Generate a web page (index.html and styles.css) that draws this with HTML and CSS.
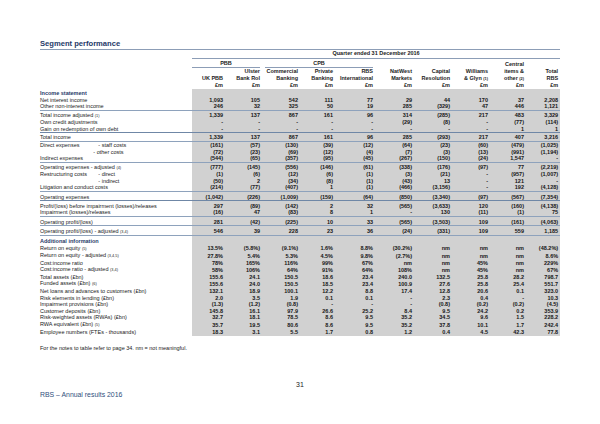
FILE: index.html
```html
<!DOCTYPE html>
<html lang="en">
<head>
<meta charset="utf-8">
<title>Segment performance</title>
<link rel="stylesheet" href="styles.css">
</head>
<body>
<div class="page">
  <h2 class="title">Segment performance</h2>
  <table class="seg">
    <colgroup>
      <col class="c-lbl"><col class="c1"><col class="c2"><col class="c3"><col class="c4"><col class="c5"><col class="c6"><col class="c7"><col class="c8"><col class="c9"><col class="c10">
    </colgroup>
    <thead>
      <tr class="h-period"><th></th><th colspan="10" class="period">Quarter ended 31 December 2016</th></tr>
      <tr class="h-group"><th></th><th colspan="2"><div class="grp">PBB</div></th><th colspan="3"><div class="grp grp-c">CPB</div></th><th></th><th></th><th></th><th class="n">Central</th><th></th></tr>
      <tr><th></th><th></th><th class="n">Ulster</th><th class="n">Commercial</th><th class="n">Private</th><th class="n">RBS</th><th class="n">NatWest</th><th class="n">Capital</th><th class="n">Williams</th><th class="n">items &amp;</th><th class="n">Total</th></tr>
      <tr><th></th><th class="n">UK PBB</th><th class="n">Bank RoI</th><th class="n">Banking</th><th class="n">Banking</th><th class="n">International</th><th class="n">Markets</th><th class="n">Resolution</th><th class="n">&amp; Glyn <small>(1)</small></th><th class="n">other <small>(2)</small></th><th class="n">RBS</th></tr>
      <tr class="h-unit"><th></th><th class="n">£m</th><th class="n">£m</th><th class="n">£m</th><th class="n">£m</th><th class="n">£m</th><th class="n">£m</th><th class="n">£m</th><th class="n">£m</th><th class="n">£m</th><th class="n">£m</th></tr>
    </thead>
    <tbody>
      <tr class="sec first"><td class="lbl">Income statement</td><td></td><td></td><td></td><td></td><td></td><td></td><td></td><td></td><td></td><td></td></tr>
      <tr><td class="lbl">Net interest income</td><td>1,093</td><td>105</td><td>542</td><td>111</td><td>77</td><td>29</td><td>44</td><td>170</td><td>37</td><td>2,208</td></tr>
      <tr><td class="lbl">Other non-interest income</td><td>246</td><td>32</td><td>325</td><td>50</td><td>19</td><td>285</td><td>(329)</td><td>47</td><td>446</td><td>1,121</td></tr>
      <tr class="ruled"><td class="lbl">Total income adjusted <small>(1)</small></td><td>1,339</td><td>137</td><td>867</td><td>161</td><td>96</td><td>314</td><td>(285)</td><td>217</td><td>483</td><td>3,329</td></tr>
      <tr><td class="lbl">Own credit adjustments</td><td>-</td><td>-</td><td>-</td><td>-</td><td>-</td><td>(29)</td><td>(8)</td><td>-</td><td>(77)</td><td>(114)</td></tr>
      <tr><td class="lbl">Gain on redemption of own debt</td><td>-</td><td>-</td><td>-</td><td>-</td><td>-</td><td>-</td><td>-</td><td>-</td><td>1</td><td>1</td></tr>
      <tr class="ruled strong"><td class="lbl">Total income</td><td>1,339</td><td>137</td><td>867</td><td>161</td><td>96</td><td>285</td><td>(293)</td><td>217</td><td>407</td><td>3,216</td></tr>
      <tr class="ruled"><td class="lbl"><span class="lead">Direct expenses</span>- staff costs</td><td>(161)</td><td>(57)</td><td>(130)</td><td>(39)</td><td>(12)</td><td>(64)</td><td>(23)</td><td>(60)</td><td>(479)</td><td>(1,025)</td></tr>
      <tr><td class="lbl"><span class="lead lead-b"></span>- other costs</td><td>(72)</td><td>(23)</td><td>(69)</td><td>(12)</td><td>(4)</td><td>(7)</td><td>(3)</td><td>(13)</td><td>(991)</td><td>(1,194)</td></tr>
      <tr><td class="lbl">Indirect expenses</td><td>(544)</td><td>(65)</td><td>(357)</td><td>(95)</td><td>(45)</td><td>(267)</td><td>(150)</td><td>(24)</td><td>1,547</td><td>-</td></tr>
      <tr class="ruled"><td class="lbl">Operating expenses - adjusted <small>(4)</small></td><td>(777)</td><td>(145)</td><td>(556)</td><td>(146)</td><td>(61)</td><td>(338)</td><td>(176)</td><td>(97)</td><td>77</td><td>(2,219)</td></tr>
      <tr><td class="lbl"><span class="lead">Restructuring costs</span>- direct</td><td>(1)</td><td>(6)</td><td>(12)</td><td>(6)</td><td>(1)</td><td>(3)</td><td>(21)</td><td>-</td><td>(957)</td><td>(1,007)</td></tr>
      <tr><td class="lbl"><span class="lead"></span>- indirect</td><td>(50)</td><td>2</td><td>(34)</td><td>(8)</td><td>(1)</td><td>(43)</td><td>13</td><td>-</td><td>121</td><td>-</td></tr>
      <tr><td class="lbl">Litigation and conduct costs</td><td>(214)</td><td>(77)</td><td>(407)</td><td>1</td><td>(1)</td><td>(466)</td><td>(3,156)</td><td>-</td><td>192</td><td>(4,128)</td></tr>
      <tr class="ruled wide"><td class="lbl">Operating expenses</td><td>(1,042)</td><td>(226)</td><td>(1,009)</td><td>(159)</td><td>(64)</td><td>(850)</td><td>(3,340)</td><td>(97)</td><td>(567)</td><td>(7,354)</td></tr>
      <tr class="ruled wide strong"><td class="lbl">Profit/(loss) before impairment (losses)/releases</td><td>297</td><td>(89)</td><td>(142)</td><td>2</td><td>32</td><td>(565)</td><td>(3,633)</td><td>120</td><td>(160)</td><td>(4,138)</td></tr>
      <tr><td class="lbl">Impairment (losses)/releases</td><td>(16)</td><td>47</td><td>(83)</td><td>8</td><td>1</td><td>-</td><td>130</td><td>(11)</td><td>(1)</td><td>75</td></tr>
      <tr class="ruled wide"><td class="lbl">Operating profit/(loss)</td><td>281</td><td>(42)</td><td>(225)</td><td>10</td><td>33</td><td>(565)</td><td>(3,503)</td><td>109</td><td>(161)</td><td>(4,063)</td></tr>
      <tr class="ruled wide"><td class="lbl">Operating profit/(loss) - adjusted <small>(3,4)</small></td><td>546</td><td>39</td><td>228</td><td>23</td><td>36</td><td>(24)</td><td>(331)</td><td>109</td><td>559</td><td>1,185</td></tr>
      <tr class="sec ruled wide"><td class="lbl">Additional information</td><td></td><td></td><td></td><td></td><td></td><td></td><td></td><td></td><td></td><td></td></tr>
      <tr><td class="lbl">Return on equity <small>(5)</small></td><td>13.5%</td><td>(5.8%)</td><td>(9.1%)</td><td>1.6%</td><td>8.8%</td><td>(30.2%)</td><td>nm</td><td>nm</td><td>nm</td><td>(48.2%)</td></tr>
      <tr><td class="lbl">Return on equity - adjusted <small>(3,4,5)</small></td><td>27.8%</td><td>5.4%</td><td>5.3%</td><td>4.5%</td><td>9.8%</td><td>(2.7%)</td><td>nm</td><td>nm</td><td>nm</td><td>8.6%</td></tr>
      <tr><td class="lbl">Cost:income ratio</td><td>78%</td><td>165%</td><td>116%</td><td>99%</td><td>67%</td><td>nm</td><td>nm</td><td>45%</td><td>nm</td><td>229%</td></tr>
      <tr><td class="lbl">Cost:income ratio - adjusted <small>(3,4)</small></td><td>58%</td><td>106%</td><td>64%</td><td>91%</td><td>64%</td><td>108%</td><td>nm</td><td>45%</td><td>nm</td><td>67%</td></tr>
      <tr><td class="lbl">Total assets (£bn)</td><td>155.6</td><td>24.1</td><td>150.5</td><td>18.6</td><td>23.4</td><td>240.0</td><td>132.5</td><td>25.8</td><td>28.2</td><td>798.7</td></tr>
      <tr><td class="lbl">Funded assets (£bn) <small>(6)</small></td><td>155.6</td><td>24.0</td><td>150.5</td><td>18.5</td><td>23.4</td><td>100.9</td><td>27.6</td><td>25.8</td><td>25.4</td><td>551.7</td></tr>
      <tr><td class="lbl">Net loans and advances to customers (£bn)</td><td>132.1</td><td>18.9</td><td>100.1</td><td>12.2</td><td>8.8</td><td>17.4</td><td>12.8</td><td>20.6</td><td>0.1</td><td>323.0</td></tr>
      <tr><td class="lbl">Risk elements in lending (£bn)</td><td>2.0</td><td>3.5</td><td>1.9</td><td>0.1</td><td>0.1</td><td>-</td><td>2.3</td><td>0.4</td><td>-</td><td>10.3</td></tr>
      <tr><td class="lbl">Impairment provisions (£bn)</td><td>(1.3)</td><td>(1.2)</td><td>(0.8)</td><td>-</td><td>-</td><td>-</td><td>(0.8)</td><td>(0.2)</td><td>(0.2)</td><td>(4.5)</td></tr>
      <tr><td class="lbl">Customer deposits (£bn)</td><td>145.8</td><td>16.1</td><td>97.9</td><td>26.6</td><td>25.2</td><td>8.4</td><td>9.5</td><td>24.2</td><td>0.2</td><td>353.9</td></tr>
      <tr><td class="lbl">Risk-weighted assets (RWAs) (£bn)</td><td>32.7</td><td>18.1</td><td>78.5</td><td>8.6</td><td>9.5</td><td>35.2</td><td>34.5</td><td>9.6</td><td>1.5</td><td>228.2</td></tr>
      <tr><td class="lbl">RWA equivalent (£bn) <small>(5)</small></td><td>35.7</td><td>19.5</td><td>80.6</td><td>8.6</td><td>9.5</td><td>35.2</td><td>37.8</td><td>10.1</td><td>1.7</td><td>242.4</td></tr>
      <tr class="last"><td class="lbl">Employee numbers (FTEs - thousands)</td><td>18.3</td><td>3.1</td><td>5.5</td><td>1.7</td><td>0.8</td><td>1.2</td><td>0.4</td><td>4.5</td><td>42.3</td><td>77.8</td></tr>
    </tbody>
  </table>
  <p class="notes">For the notes to table refer to page 34. nm = not meaningful.</p>
  <footer class="foot">
    <div class="pageno">31</div>
    <div class="doc">RBS – Annual results 2016</div>
  </footer>
</div>
</body>
</html>
```

FILE: styles.css
```css
* { box-sizing: border-box; }
html, body { margin: 0; padding: 0; background: #ffffff; }
body { font-family: "Liberation Sans", Arial, sans-serif; color: #1b1b1b; }

.page {
  width: 600px;
  height: 424px;
  padding: 39px 40px 25px 40px;
  display: flex;
  flex-direction: column;
}

.title {
  margin: 0;
  font-size: 7.6px;
  line-height: 10px;
  font-weight: bold;
  color: #1f3a68;
  border-bottom: 1px solid #8c9db6;
}

.seg {
  width: 520px;
  border-collapse: collapse;
  table-layout: fixed;
  font-size: 5.5px;
  line-height: 6.6px;
}
.c-lbl { width: 152px; }
.c1 { width: 33px; }
.c2 { width: 37px; }
.c3 { width: 38px; }
.c4 { width: 35px; }
.c5 { width: 40px; }
.c6 { width: 39px; }
.c7 { width: 38px; }
.c8 { width: 38px; }
.c9 { width: 36px; }
.c10 { width: 34px; }

.seg th, .seg td {
  padding: 0;
  white-space: nowrap;
  overflow: visible;
  vertical-align: middle;
}
.seg th { font-weight: bold; color: #1b1b1b; }
.seg th.n { text-align: right; padding-right: 2px; }
.seg small { font-size: 0.7em; font-weight: normal; }
.seg th small { font-weight: bold; }

.h-period th { height: 8px; }
.period {
  text-align: center;
  border-bottom: 1px solid #8c9db6;
}
.h-group th { height: 10px; vertical-align: top; padding-top: 1.5px; }
.h-group th.n { vertical-align: bottom; padding-top: 0; }
.grp {
  text-align: center;
  border-bottom: 1px solid #8c9db6;
  margin-right: 2px;
  line-height: 6.5px;
}
.grp-c { margin-left: 3px; }
.h-unit th { padding-bottom: 0.5px; }

.seg tbody td {
  background: #d1d1d1;
  text-align: right;
  padding-right: 2px;
  font-weight: bold;
  color: #161616;
}
.seg tbody td.lbl {
  background: transparent;
  text-align: left;
  padding-right: 0;
  font-weight: normal;
  color: #222222;
}
.seg tbody tr.sec td.lbl { font-weight: bold; color: #1f3a68; }
.seg tbody tr.first td { padding-top: 1px; }
.seg tbody tr.ruled td {
  border-top: 1px solid #8ea2bc;
  padding-top: 0.6px;
}
.seg tbody tr.ruled.wide td { padding-top: 1.6px; }
.seg tbody tr.ruled.strong td { border-top-color: #6f87a6; }
.seg tbody tr.last td { padding-bottom: 1px; }

.lead { display: inline-block; width: 10.6em; }
.lead-b { width: 9.7em; }

.notes {
  margin: 9px 0 0 0;
  font-size: 5.5px;
  line-height: 7px;
  color: #222222;
}

.foot { margin-top: auto; }
.pageno {
  text-align: center;
  font-size: 7px;
  line-height: 8px;
  color: #222222;
}
.doc {
  margin-top: 2px;
  font-size: 6.9px;
  line-height: 8px;
  color: #2f4f7c;
}
```
